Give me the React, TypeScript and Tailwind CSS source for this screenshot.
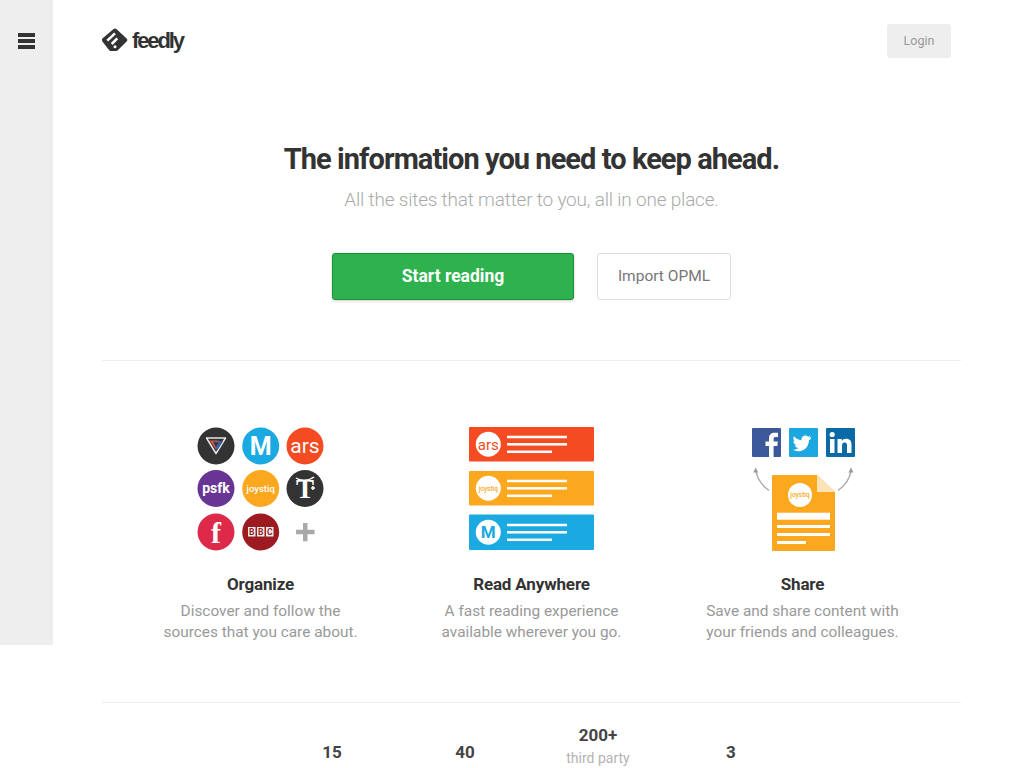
const features = [
  {
    title: "Organize",
    lines: ["Discover and follow the", "sources that you care about."],
    art: <OrganizeArt />,
  },
  {
    title: "Read Anywhere",
    lines: ["A fast reading experience", "available wherever you go."],
    art: <ReadArt />,
  },
  {
    title: "Share",
    lines: ["Save and share content with", "your friends and colleagues."],
    art: <ShareArt />,
  },
];

const sans = "font-['Roboto',sans-serif]";

function Badge({ x, y, fill, label, size, color = "#fff", r = 18.5, weight = 700, family = "'Roboto', sans-serif" }: {
  x: number; y: number; fill: string; label: string; size: number; color?: string; r?: number; weight?: number; family?: string;
}) {
  return (
    <g>
      <circle cx={x} cy={y} r={r} fill={fill} />
      <text x={x} y={y + size * 0.35} textAnchor="middle" fontSize={size} fontWeight={weight} fill={color} fontFamily={family}>
        {label}
      </text>
    </g>
  );
}

function OrganizeArt() {
  const serif = "'Liberation Serif', serif";
  return (
    <svg width="130" height="126" viewBox="196 426 130 126">
      <circle cx="216" cy="446" r="18.5" fill="#333333" />
      <path d="M206.500 438h19l-9.500 15.500z" fill="none" stroke="#e8e8e8" strokeWidth="1.500" strokeLinejoin="round" />
      <path d="M209.500 440.500h8l3 1-4.500 8z" fill="#e2533a" />
      <path d="M213 441.500h10l-6 9z" fill="#3a5f9e" />
      <path d="M213.500 442.500h5l-2.500 4z" fill="#333333" />
      <Badge x={260.7} y={446} fill="#1aa9e1" label="M" size={25} />
      <Badge x={305} y={446} fill="#f44b22" label="ars" size={21} weight={400} />
      <Badge x={216} y={488.5} fill="#673594" label="psfk" size={14} />
      <Badge x={260.7} y={488.5} fill="#fba81e" label="joystiq" size={9.500} weight={500} />
      <Badge x={305} y={488.5} fill="#333333" label="T" size={27} family={serif} />
      <path d="M296 478c4 3 13 3 18-1M311 488h4M313 486v4" fill="none" stroke="#fff" strokeWidth="1.500" />
      <Badge x={216} y={532} fill="#dd2a4a" label="f" size={30} family={serif} />
      <circle cx="260.7" cy="532" r="18.5" fill="#9c1a20" />
      <rect x="248" y="527" width="7.5" height="9.5" fill="#eee" />
      <rect x="257" y="527" width="7.5" height="9.5" fill="#eee" />
      <rect x="266" y="527" width="7.5" height="9.5" fill="#eee" />
      <text x="251.7" y="535" textAnchor="middle" fontSize="8.500" fontWeight="700" fill="#9c1a20" fontFamily="'Roboto', sans-serif">B</text>
      <text x="260.7" y="535" textAnchor="middle" fontSize="8.500" fontWeight="700" fill="#9c1a20" fontFamily="'Roboto', sans-serif">B</text>
      <text x="269.7" y="535" textAnchor="middle" fontSize="8.500" fontWeight="700" fill="#9c1a20" fontFamily="'Roboto', sans-serif">C</text>
      <path d="M303 523h4.500v6.700h7v4.600h-7v7h-4.500v-7h-7v-4.600h7z" fill="#a9a9a9" />
    </svg>
  );
}

function ReadCard({ y, h, fill, label, size, weight = 400 }: { y: number; h: number; fill: string; label: string; size: number; weight?: number }) {
  const mid = y + h / 2;
  return (
    <g>
      <rect x="469" y={y} width="125" height={h} rx="1" fill={fill} />
      <Badge x={488.3} y={mid} r={12.5} fill="#fff" color={fill} label={label} size={size} weight={weight} />
      <rect x="507" y={mid - 8.5} width="60" height="2.500" fill="#fff" />
      <rect x="507" y={mid - 1.2} width="60" height="2.500" fill="#fff" />
      <rect x="507" y={mid + 6.300} width="45" height="2.500" fill="#fff" />
    </g>
  );
}

function ReadArt() {
  return (
    <svg width="127" height="126" viewBox="468 426 127 126">
      <ReadCard y={427} h={34.500} fill="#f44b22" label="ars" size={15} />
      <ReadCard y={471} h={34.500} fill="#fba81e" label="joystiq" size={6.500} weight={500} />
      <ReadCard y={514.500} h={35.500} fill="#1aa9e1" label="M" size={17} weight={700} />
    </svg>
  );
}

function ShareArt() {
  return (
    <svg width="107" height="126" viewBox="749 426 107 126">
      <rect x="752" y="428" width="29" height="29" rx="1" fill="#3b5998" />
      <path d="M769 457v-11h-3.500v-4.500h3.500v-3.200c0-3.800 2.300-5.600 5.300-5.600h3.700v4.400h-2.500c-1.500 0-1.900.8-1.900 1.900v2.500h4.300l-.6 4.500h-3.700v11z" fill="#fff" />
      <rect x="789" y="428" width="29" height="29" rx="1" fill="#1da7e0" />
      <path d="M811 437.200c-.7.300-1.400.5-2.200.6.800-.5 1.400-1.200 1.700-2.100-.7.400-1.600.8-2.400 1-1.600-1.700-4.400-1.600-5.800.3-.8 1-1 2.200-.7 3.300-3.100-.2-5.900-1.700-7.700-4-1 1.800-.5 4 1.200 5.200-.6 0-1.200-.2-1.800-.4 0 1.900 1.300 3.600 3.200 4-.6.200-1.200.2-1.800.1.500 1.600 2 2.700 3.700 2.700-1.700 1.300-3.800 1.900-5.900 1.700 6.200 3.900 14.300.7 16-6.400.3-1 .4-1.900.4-2.900.8-.6 1.600-1.300 2.200-2.100z" fill="#fff" />
      <rect x="826" y="428" width="29" height="29" rx="1" fill="#0a6aa5" />
      <rect x="830" y="439" width="4.500" height="14" fill="#fff" />
      <circle cx="832.200" cy="434.500" r="2.600" fill="#fff" />
      <path d="M837.500 439h4.300v2c1-1.500 2.600-2.400 4.500-2.300 3.600 0 5.200 2.300 5.200 6v8.300h-4.500v-7.500c0-1.900-.7-3-2.300-3-1.800 0-2.700 1.200-2.700 3v7.500h-4.500z" fill="#fff" />
      <path d="M769 490.500c-7-5-12-12-13-20M838 490.500c7-5 12-12 13-20" fill="none" stroke="#aaaaaa" strokeWidth="1.500" />
      <path d="M755.700 467.500l-2.500 5h5zM851 467.500l-2.500 5h5z" fill="#999999" />
      <path d="M772 476a1 1 0 0 1 1-1h44l18 17v58a1 1 0 0 1-1 1h-61a1 1 0 0 1-1-1z" fill="#fba81e" />
      <path d="M817 475l18 17h-18z" fill="#fde3b5" />
      <Badge x={800} y={495} r={12} fill="#fff" color="#fba81e" label="joystiq" size={6.500} weight={500} />
      <rect x="777" y="512.700" width="53" height="7" fill="#fff" />
      <rect x="777" y="525" width="53" height="3" fill="#fff" />
      <rect x="777" y="533" width="53" height="3" fill="#fff" />
      <rect x="777" y="541" width="29" height="3" fill="#fff" />
    </svg>
  );
}

function FeedlyLogo() {
  return (
    <div className="flex items-center">
      <svg width="26" height="24" viewBox="0 0 26 24">
        <path d="M11.300 1.300a2.400 2.400 0 0 1 3.400 0l9.900 9.300a2 2 0 0 1 0 2.900l-8.800 8.700a2.400 2.400 0 0 1-1.700.7h-5.200a2.400 2.400 0 0 1-1.700-.7l-6.800-8.700a2 2 0 0 1 0-2.900z" fill="#333333" />
        <path d="M13 5.300L5.300 12.700M15.300 10.300L9.700 16" fill="none" stroke="#ffffff" strokeWidth="2.500" />
        <circle cx="13" cy="18.700" r="1.500" fill="#ffffff" />
      </svg>
      <span className="mt-[2px] ml-[4px] font-['Liberation_Sans',sans-serif] text-[22px] leading-none font-bold tracking-[-2.100px] text-[#333333]">feedly</span>
    </div>
  );
}

function Stat({ value, label }: { value: string; label?: string }) {
  return (
    <div className={`flex w-[133px] flex-col items-center ${label ? "" : "mt-[17px]"}`}>
      <span className="text-[17px] leading-[24px] font-bold text-[#444444]">{value}</span>
      {label && <span className="mt-[1px] text-[14px] leading-[20px] text-[#b3b3b3]">{label}</span>}
    </div>
  );
}

export default function App() {
  return (
    <div className={`flex h-[768px] overflow-hidden bg-white ${sans}`}>
      <aside className="h-[645px] w-[53px] shrink-0 bg-[#eeeeee] pt-[33px] pl-[18px]">
        <div className="flex w-[17px] flex-col gap-[2.500px]">
          <div className="h-[3.500px] bg-[#333333]" />
          <div className="h-[3.500px] bg-[#333333]" />
          <div className="h-[3.500px] bg-[#333333]" />
        </div>
      </aside>

      <main className="flex-1 pr-[63px] pl-[49px]">
        <header className="flex items-start justify-between pt-[24px] pr-[10px]">
          <div className="pt-[4px]"><FeedlyLogo /></div>
          <button className="h-[34px] w-[64px] rounded-[3px] bg-[#eeeeee] text-[12.500px] text-[#999999]">Login</button>
        </header>

        <section className="flex flex-col items-center border-b border-[#eeeeee] pt-[81px] pb-[60px]">
          <h1 className="text-[29px] leading-[40px] font-bold tracking-[-0.950px] text-[#333333]">The information you need to keep ahead.</h1>
          <p className="mt-[7px] text-[19px] leading-[28px] font-light tracking-[-0.200px] text-[#aaaaaa]">All the sites that matter to you, all in one place.</p>
          <div className="mt-[39px] flex gap-[23px]">
            <button className="h-[47px] w-[242px] rounded-[3px] border border-[#1d8f3f] bg-[#2db24e] text-[17.500px] font-bold text-white shadow-[0_1px_3px_rgba(0,0,0,0.2)]">Start reading</button>
            <button className="h-[47px] w-[134px] rounded-[3px] border border-[#dddddd] bg-white text-[15.500px] text-[#777777]">Import OPML</button>
          </div>
        </section>

        <section className="grid grid-cols-[317px_225px_317px] border-b border-[#eeeeee] pt-[65px] pb-[59px]">
          {features.map((item) => (
            <div key={item.title} className="flex flex-col items-center">
              <div className="flex h-[126px] items-center justify-center">{item.art}</div>
              <h3 className="mt-[19px] text-[17px] leading-[26px] font-bold tracking-[-0.150px] text-[#333333]">{item.title}</h3>
              {item.lines.map((line, index) => (
                <p key={line} className={`text-[15.400px] leading-[21px] whitespace-nowrap text-[#999999] ${index === 0 ? "mt-[4px]" : ""}`}>{line}</p>
              ))}
            </div>
          ))}
        </section>

        <section className="flex items-start justify-center pt-[20px]">
          <Stat value="15" />
          <Stat value="40" />
          <Stat value="200+" label="third party" />
          <Stat value="3" />
        </section>
      </main>
    </div>
  );
}
